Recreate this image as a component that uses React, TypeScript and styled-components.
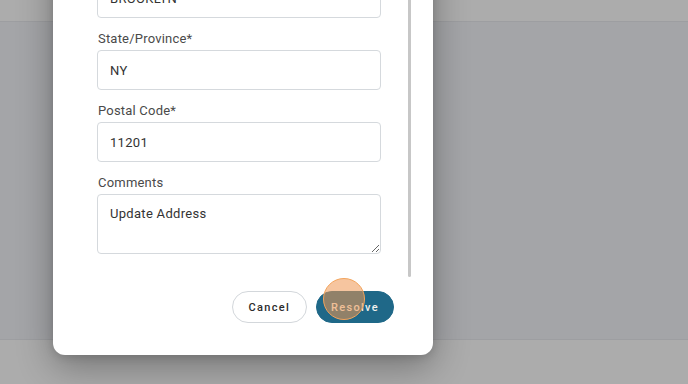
import React from 'react';
import styled, { createGlobalStyle } from 'styled-components';

const GlobalStyle = createGlobalStyle`
  html, body {
    margin: 0;
    padding: 0;
    height: 100%;
    overflow: hidden;
  }
  body {
    font-family: Roboto, "Liberation Sans", sans-serif;
    background: #a5a6a9;
  }
`;

const Page = styled.div`
  position: relative;
  display: flex;
  flex-direction: column;
  width: 688px;
  height: 384px;
  overflow: hidden;
`;

const Band = styled.div<{ $edge: 'top' | 'bottom' }>`
  height: ${({ $edge }) => ($edge === 'top' ? '21px' : '44px')};
  background: #acacac;
  border-${({ $edge }) => ($edge === 'top' ? 'bottom' : 'top')}: 1px solid #9d9ea1;
`;

const Backdrop = styled.div`
  flex: 1;
  background: #a4a5a8;
`;

const Modal = styled.div`
  position: absolute;
  left: 53px;
  bottom: 29px;
  width: 380px;
  display: flex;
  flex-direction: column;
  background: #ffffff;
  border-radius: 12px;
  box-shadow: 0 12px 36px rgba(0, 0, 0, 0.32), 0 2px 8px rgba(0, 0, 0, 0.12);
`;

const Body = styled.div`
  display: flex;
  padding: 20px 0 0 44px;
`;

const Form = styled.div`
  width: 284px;
  display: flex;
  flex-direction: column;
  gap: 13px;
  padding-bottom: 23px;
`;

const ScrollThumb = styled.div`
  width: 3px;
  margin-left: 27px;
  background: #c7c7c7;
  border-radius: 0 0 2px 2px;
`;

const Field = styled.label`
  display: flex;
  flex-direction: column;
  gap: 4px;
`;

const Label = styled.span`
  font-size: 13px;
  line-height: 15px;
  color: #4a4a4a;
  padding-left: 1px;
  letter-spacing: 0.2px;
`;

const TextInput = styled.input`
  box-sizing: border-box;
  width: 100%;
  height: 40px;
  padding: 0 12px;
  border: 1px solid #d5d9dd;
  border-radius: 4px;
  font-family: inherit;
  font-size: 13px;
  color: #333;
  background: #fff;
  outline: none;
  letter-spacing: 0.3px;
`;

const TextArea = styled.textarea`
  box-sizing: border-box;
  width: 100%;
  height: 60px;
  padding: 11px 12px;
  border: 1px solid #d5d9dd;
  border-radius: 4px;
  font-family: inherit;
  font-size: 13px;
  line-height: 16px;
  color: #333;
  resize: vertical;
  outline: none;
  letter-spacing: 0.3px;
`;

const Footer = styled.div`
  display: flex;
  justify-content: flex-end;
  gap: 9px;
  padding: 14px 39px 32px 0;
`;

const Button = styled.button<{ $primary?: boolean }>`
  position: relative;
  box-sizing: border-box;
  height: 32px;
  padding: 0 ${({ $primary }) => ($primary ? '14px' : '16px')};
  border-radius: 16px;
  border: 1px solid ${({ $primary }) => ($primary ? '#1f6888' : '#d3d7db')};
  background: ${({ $primary }) => ($primary ? '#1f6888' : '#ffffff')};
  color: ${({ $primary }) => ($primary ? '#f2f2ee' : '#2c2c2c')};
  font-family: inherit;
  font-size: 11px;
  font-weight: 500;
  letter-spacing: 1.3px;
`;

const ClickMarker = styled.span`
  position: absolute;
  left: 6px;
  top: -14px;
  width: 42px;
  height: 42px;
  box-sizing: border-box;
  border-radius: 50%;
  border: 1.5px solid #f3a45c;
  background: rgba(238, 150, 80, 0.55);
  pointer-events: none;
`;

export default function App() {
  return (
    <>
      <GlobalStyle />
      <Page>
        <Band $edge="top" />
        <Backdrop />
        <Band $edge="bottom" />
        <Modal>
          <Body>
            <Form>
              <Field>
                <Label>City*</Label>
                <TextInput defaultValue="BROOKLYN" readOnly />
              </Field>
              <Field>
                <Label>State/Province*</Label>
                <TextInput defaultValue="NY" readOnly />
              </Field>
              <Field>
                <Label>Postal Code*</Label>
                <TextInput defaultValue="11201" readOnly />
              </Field>
              <Field>
                <Label>Comments</Label>
                <TextArea defaultValue="Update Address" readOnly />
              </Field>
            </Form>
            <ScrollThumb />
          </Body>
          <Footer>
            <Button>Cancel</Button>
            <Button $primary>
              Resolve
              <ClickMarker />
            </Button>
          </Footer>
        </Modal>
      </Page>
    </>
  );
}
